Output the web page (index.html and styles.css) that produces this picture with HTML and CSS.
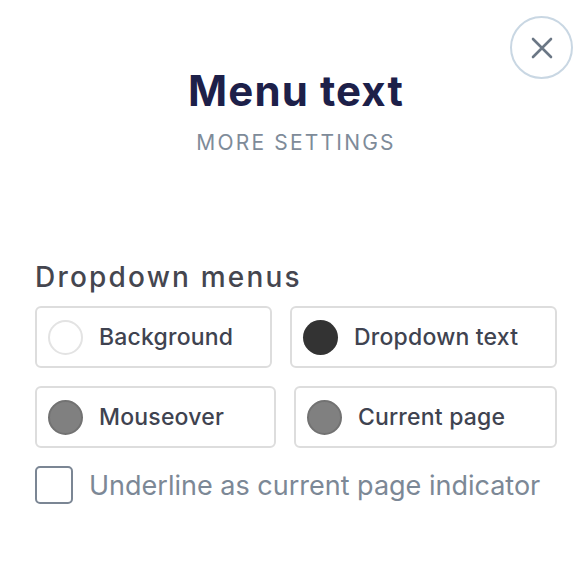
FILE: index.html
```html
<!DOCTYPE html>
<html>
<head>
<meta charset="utf-8">
<link rel="stylesheet" href="styles.css">
</head>
<body>
<div class="panel">
  <button class="close" aria-label="Close">
    <svg width="22" height="22" viewBox="0 0 22 22"><path d="M2 2 L20 20 M20 2 L2 20" stroke="#6b7785" stroke-width="2.6" stroke-linecap="round"/></svg>
  </button>
  <header class="head">
    <h1 class="title">Menu text</h1>
    <div class="subtitle">MORE SETTINGS</div>
  </header>
  <section class="section">
    <h2 class="section-title">Dropdown menus</h2>
    <div class="row">
      <div class="swatch-btn"><span class="dot dot-white"></span><span class="label">Background</span></div>
      <div class="swatch-btn"><span class="dot dot-dark"></span><span class="label">Dropdown text</span></div>
    </div>
    <div class="row">
      <div class="swatch-btn"><span class="dot dot-gray"></span><span class="label">Mouseover</span></div>
      <div class="swatch-btn"><span class="dot dot-gray"></span><span class="label">Current page</span></div>
    </div>
    <label class="check">
      <span class="box"></span>
      <span class="check-label">Underline as current page indicator</span>
    </label>
  </section>
</div>
</body>
</html>
```

FILE: styles.css
```css
html, body {
  margin: 0;
  padding: 0;
  background: #ffffff;
}
body {
  font-family: "Inter", "Lato", sans-serif;
}
.panel {
  position: relative;
  width: 582px;
  height: 562px;
  box-sizing: border-box;
  padding: 0 25px 0 35px;
}
.close {
  position: absolute;
  top: 16px;
  left: 510px;
  width: 63px;
  height: 63px;
  border-radius: 50%;
  border: 2px solid #c9d7e3;
  background: #fff;
  padding: 0;
  display: flex;
  align-items: center;
  justify-content: center;
}
.head {
  display: flex;
  flex-direction: column;
  align-items: center;
  padding-top: 66px;
}
.title {
  margin: 0;
  font-size: 42px;
  line-height: 50px;
  font-weight: 700;
  letter-spacing: 1.1px;
  color: #1d2049;
}
.subtitle {
  margin-top: 14px;
  font-size: 21px;
  line-height: 26px;
  letter-spacing: 2.2px;
  color: #7e8b99;
}
.section {
  padding-top: 104px;
}
.section-title {
  margin: 0 0 12px 0;
  font-size: 28px;
  line-height: 34px;
  font-weight: 500;
  letter-spacing: 2.2px;
  color: #45464f;
}
.row {
  display: flex;
  gap: 18px;
  margin-bottom: 18px;
}
.swatch-btn {
  flex: 1 1 auto;
  display: flex;
  align-items: center;
  gap: 16px;
  height: 62px;
  box-sizing: border-box;
  padding: 0 11px;
  border: 2px solid #dddddd;
  border-radius: 6px;
}
.dot {
  width: 35px;
  height: 35px;
  border-radius: 50%;
  box-sizing: border-box;
  flex: none;
}
.dot-white { background: #fff; border: 2px solid #e3e3e3; }
.dot-dark { background: #333333; }
.dot-gray { background: #808080; border: 2px solid #727272; }
.label {
  font-size: 23px;
  font-weight: 500;
  letter-spacing: 0.2px;
  color: #3f4350;
}
.check {
  display: flex;
  align-items: center;
  gap: 16px;
  margin-top: 6px;
}
.box {
  width: 38px;
  height: 38px;
  box-sizing: border-box;
  border: 2px solid #7b8694;
  border-radius: 5px;
  flex: none;
}
.check-label {
  font-size: 27px;
  color: #7c8896;
}
```
